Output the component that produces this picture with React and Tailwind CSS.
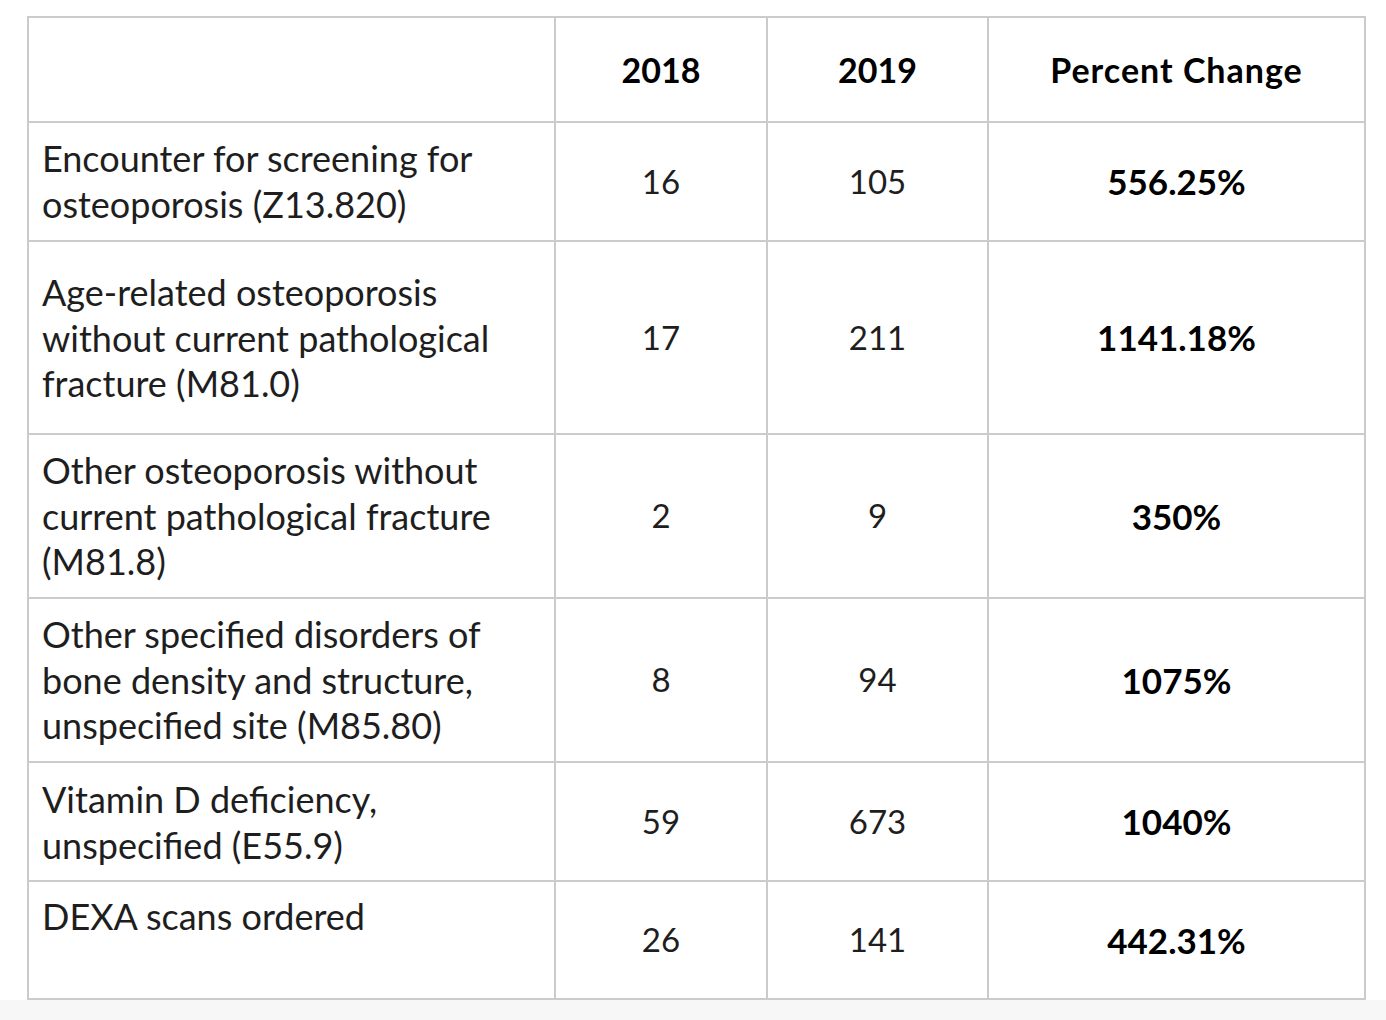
import React from 'react';

const rows = [
    { label: ['Encounter for screening for', 'osteoporosis (Z13.820)'], a: '16', b: '105', pct: '556.25%', h: 'h-[119px]', pt: 'pt-[13px]' },
    { label: ['Age-related osteoporosis', 'without current pathological', 'fracture (M81.0)'], a: '17', b: '211', pct: '1141.18%', h: 'h-[193px]', pt: 'pt-[28px]' },
    { label: ['Other osteoporosis without', 'current pathological fracture', '(M81.8)'], a: '2', b: '9', pct: '350%', h: 'h-[164px]', pt: 'pt-[13px]' },
    { label: ['Other specified disorders of', 'bone density and structure,', 'unspecified site (M85.80)'], a: '8', b: '94', pct: '1075%', h: 'h-[164px]', pt: 'pt-[13px]' },
    { label: ['Vitamin D deficiency,', 'unspecified (E55.9)'], a: '59', b: '673', pct: '1040%', h: 'h-[119px]', pt: 'pt-[14px]' },
    { label: ['DEXA scans ordered'], a: '26', b: '141', pct: '442.31%', h: 'h-[118px]', pt: 'pt-[12px]' },
];

const cell = 'border-r-2 border-b-2 border-[#cbcbcb]';

export default function App() {
    return (
        <div className="w-[1386px] h-[1020px] bg-white flex flex-col font-['Lato',sans-serif] text-[#1e1e1e]">
            <div className="pt-[16px] pl-[27px] h-[1000px]">
                <div className="w-[1339px] border-l-2 border-t-2 border-[#cbcbcb] grid grid-cols-[527px_212px_221px_377px]">
                    {/* header */}
                    <div className={`${cell} h-[105px]`} />
                    <div className={`${cell} h-[105px] flex items-center justify-center text-[34px] font-bold text-black`}>2018</div>
                    <div className={`${cell} h-[105px] flex items-center justify-center text-[34px] font-bold text-black`}>2019</div>
                    <div className={`${cell} h-[105px] flex items-center justify-center text-[34px] font-bold tracking-[1px] text-black`}>Percent Change</div>

                    {rows.map((r, i) => (
                        <React.Fragment key={i}>
                            <div className={`${cell} ${r.h} ${r.pt} pl-[13px] text-[36px] leading-[45.5px] whitespace-nowrap`}>
                                {r.label.map((l, j) => (
                                    <div key={j}>{l}</div>
                                ))}
                            </div>
                            <div className={`${cell} ${r.h} flex items-center justify-center text-[33px]`}>{r.a}</div>
                            <div className={`${cell} ${r.h} flex items-center justify-center text-[33px]`}>{r.b}</div>
                            <div className={`${cell} ${r.h} flex items-center justify-center text-[35px] font-bold text-black`}>{r.pct}</div>
                        </React.Fragment>
                    ))}
                </div>
            </div>
            <div className="h-[20px] bg-[#f7f7f7]" />
        </div>
    );
}
